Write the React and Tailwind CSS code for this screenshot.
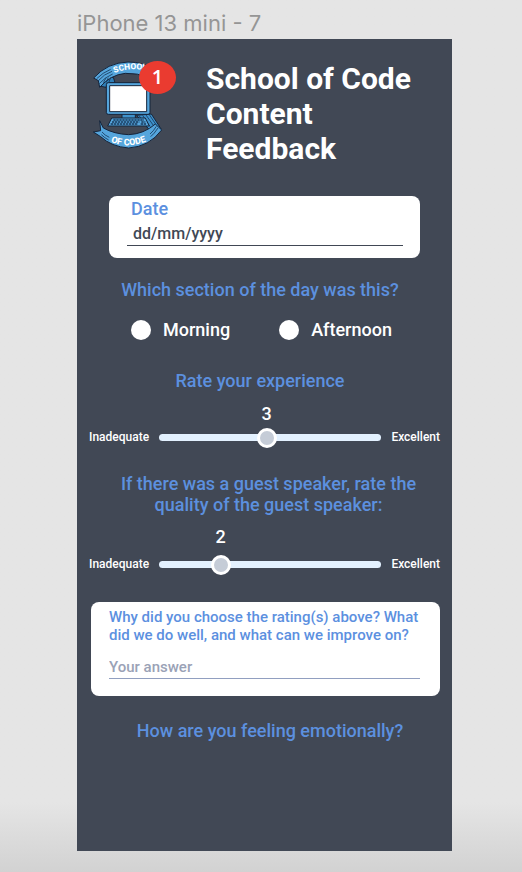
import { useId, useState } from "react";

function SchoolLogo() {
  return (
    <svg viewBox="24 30 210 270" className="h-[90px] w-[70px]" role="img" aria-label="School of Code logo">
      <defs>
        <path id="ribbon-top" d="M91 69 Q138 51 194 62" />
        <path id="ribbon-bottom" d="M80 276 Q132 297 190 273" />
      </defs>
      <g stroke="#15243a" strokeWidth="3" strokeLinejoin="round">
        <path d="M46 108 L62 84 L88 82 L93 98 L70 100 L66 112 Z" fill="#2f7fb8" />
        <path d="M29 84 Q70 38 132 36 Q180 36 208 58 L196 84 Q160 68 124 70 Q80 74 47 112 L43 92 Z" fill="#55a5dc" />
        <path d="M158 196 L202 192 L232 238 L206 250 Z" fill="#3f92cc" />
        <path d="M47 212 L58 234 Q90 252 134 254 Q180 252 214 222 L233 240 Q196 290 134 294 Q82 290 50 260 L28 246 L50 242 Z" fill="#55a5dc" />
      </g>
      <g stroke="#173a5c" strokeWidth="2.5" fill="none">
        <path d="M38 86 Q56 68 80 58 M42 93 Q60 72 84 64 M46 101 Q62 82 86 72" />
        <path d="M58 98 L66 84 M66 98 L73 83 M75 96 L80 82" />
        <path d="M166 198 L190 234 M176 196 L198 230 M186 195 L208 226 M196 194 L216 224" />
        <path d="M200 260 Q210 252 222 234 M198 252 Q208 244 217 229" />
        <path d="M54 246 Q62 256 76 262 M52 254 Q62 264 74 270" />
      </g>
      <g stroke="#15243a" strokeWidth="3" strokeLinejoin="round">
        <path d="M114 190 H154 V206 H114 Z" fill="#3f92cc" />
        <rect x="67" y="98" width="131" height="95" rx="6" fill="#55a5dc" />
        <rect x="77" y="107" width="111" height="78" fill="#fff" />
        <path d="M83 204 H184 L196 228 H71 Z" fill="#55a5dc" />
      </g>
      <path
        d="M88 210 H180 M84 216 H166 M172 216 H184 M80 222 H162 M170 222 H188"
        stroke="#173a5c"
        strokeWidth="4"
        strokeDasharray="7 2"
        fill="none"
      />
      <g fill="#fff" fontFamily="Roboto, sans-serif" fontWeight="800">
        <text fontSize="25">
          <textPath href="#ribbon-top">SCHOOL</textPath>
        </text>
        <text fontSize="27">
          <textPath href="#ribbon-bottom">OF CODE</textPath>
        </text>
      </g>
    </svg>
  );
}

function RatingSlider({ label, initial, gap }) {
  const id = useId();
  const [value, setValue] = useState(initial);
  const fraction = (value - 1) / 4;
  return (
    <div className={`grid grid-cols-[auto_1fr_auto] items-center gap-x-[10px] px-3 ${gap}`}>
      <div className="col-start-2">
        <output
          htmlFor={id}
          className="block w-5 text-center text-lg leading-[21px]"
          style={{ marginLeft: `calc(${fraction} * (100% - 20px))` }}
        >
          {Math.round(value)}
        </output>
      </div>
      <span className="col-start-1 text-xs">Inadequate</span>
      <input
        id={id}
        type="range"
        aria-label={label}
        min="1"
        max="5"
        step="0.01"
        value={value}
        onChange={(e) => setValue(Number(e.target.value))}
        className="h-5 w-full min-w-0 cursor-pointer appearance-none bg-transparent [&::-webkit-slider-runnable-track]:h-[7px] [&::-webkit-slider-runnable-track]:rounded-full [&::-webkit-slider-runnable-track]:bg-[#e3f1ff] [&::-webkit-slider-thumb]:-mt-[6px] [&::-webkit-slider-thumb]:size-5 [&::-webkit-slider-thumb]:appearance-none [&::-webkit-slider-thumb]:rounded-full [&::-webkit-slider-thumb]:border-3 [&::-webkit-slider-thumb]:border-solid [&::-webkit-slider-thumb]:border-white [&::-webkit-slider-thumb]:bg-[#c5ccd7]"
      />
      <span className="text-xs">Excellent</span>
    </div>
  );
}

function RadioOption({ children }) {
  return (
    <label className="flex items-center gap-3 text-lg leading-[21px]">
      <input
        type="radio"
        name="section"
        className="size-5 appearance-none rounded-full border-white bg-white checked:border-5 checked:bg-[#5c90df]"
      />
      {children}
    </label>
  );
}

export default function App() {
  return (
    <div className="flex min-h-screen flex-col bg-[#e5e5e5] bg-linear-to-b from-[#e5e5e5] from-92% to-[#d2d2d2] pt-2 pr-[70px] pb-[21px] pl-[77px] font-['Roboto',sans-serif]">
      <p className="h-[31px] font-['Inter',sans-serif] text-[22px] leading-[31px] text-[#959595]">iPhone 13 mini - 7</p>
      <main className="flex-1 bg-[#414855] font-medium text-white">
        <header className="flex items-start gap-11 pt-[21px] pr-8 pl-[15px]">
          <div className="relative shrink-0">
            <SchoolLogo />
            <span className="absolute top-px left-[47px] flex h-[33px] w-[37px] items-center justify-center rounded-[50%] bg-[#ea3b30] pb-0.5 font-['Open_Sans',sans-serif] text-xl font-semibold">
              1
            </span>
          </div>
          <h1 className="pt-px text-[30px] leading-[35px] font-bold">School of Code Content Feedback</h1>
        </header>

        <form>
          <div className="mx-8 mt-[30px] rounded-lg bg-white pt-[2px] pr-[17px] pb-3 pl-[18px]">
            <label htmlFor="date" className="block pl-1 text-lg leading-[21px] text-[#5c90df]">
              Date
            </label>
            <input
              id="date"
              type="text"
              placeholder="dd/mm/yyyy"
              className="block h-[27px] w-full border-b border-[#414855] pt-0.5 pl-1.5 text-base text-[#414855] outline-none placeholder:text-[#414855]"
            />
          </div>

          <fieldset className="mt-[21px]">
            <legend className="w-full pr-[9px] text-center text-lg leading-[21px] text-[#5c90df]">
              Which section of the day was this?
            </legend>
            <div className="flex gap-[49px] pt-[19px] pl-[54px]">
              <RadioOption>Morning</RadioOption>
              <RadioOption>Afternoon</RadioOption>
            </div>
          </fieldset>

          <h2 className="mt-[30px] pr-[9px] text-center text-lg leading-[21px] text-[#5c90df]">Rate your experience</h2>
          <div className="mt-3">
            <RatingSlider label="Rate your experience" initial={2.93} gap="gap-y-[3px]" />
          </div>

          <h2 className="mt-[26px] pr-8 pl-10 text-center text-lg leading-[21px] text-[#5c90df]">
            If there was a guest speaker, rate the quality of the guest speaker:
          </h2>
          <div className="mt-[11px]">
            <RatingSlider label="Rate the quality of the guest speaker" initial={2.02} gap="gap-y-[7px]" />
          </div>

          <div className="mt-7 mr-3 ml-[14px] rounded-lg bg-white pt-1.5 pr-5 pb-[17px] pl-[18px]">
            <label htmlFor="answer" className="block text-[15px] leading-[18px] text-[#5c90df]">
              Why did you choose the rating(s) above? What did we do well, and what can we improve on?
            </label>
            <input
              id="answer"
              type="text"
              placeholder="Your answer"
              className="mt-[10px] block h-[25px] w-full border-b border-[#919fc0] pt-0.5 text-[15px] text-[#414855] outline-none placeholder:text-[#9aa2b6]"
            />
          </div>

          <h2 className="mt-6 pl-[11px] text-center text-lg leading-[21px] text-[#5c90df]">How are you feeling emotionally?</h2>
        </form>
      </main>
    </div>
  );
}
